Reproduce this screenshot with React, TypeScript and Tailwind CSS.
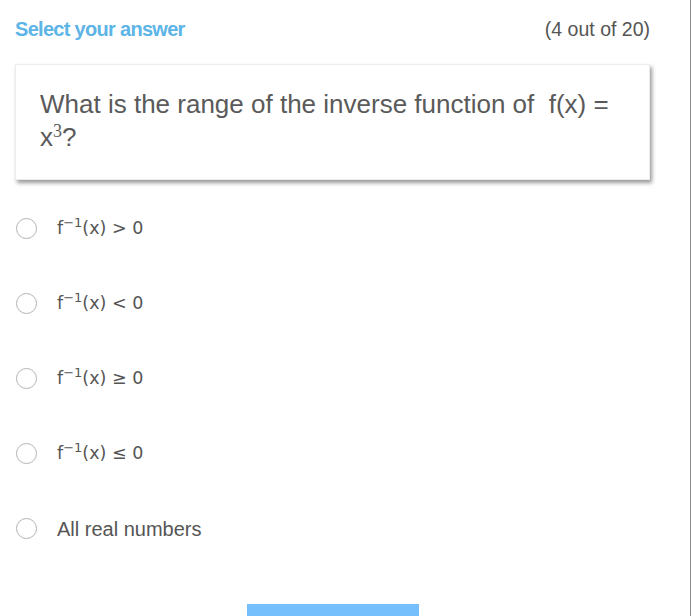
import React from 'react';

type Option = { id: string; fn?: boolean; rel?: string; label?: string };

const OPTIONS: Option[] = [
  { id: 'a', fn: true, rel: '>' },
  { id: 'b', fn: true, rel: '<' },
  { id: 'c', fn: true, rel: '≥' },
  { id: 'd', fn: true, rel: '≤' },
  { id: 'e', label: 'All real numbers' },
];

function Formula({ rel }: { rel: string }) {
  return (
    <span className="font-['DejaVu_Sans',sans-serif] text-[17.5px] text-[#555]">
      f<sup className="top-[-7px] text-[13px]">−1</sup>(x) {rel} 0
    </span>
  );
}

export default function App() {
  return (
    <div className="w-[691px] min-h-[616px] border-r border-[#8c8c8c] bg-white font-['Liberation_Sans',Arial,sans-serif] overflow-hidden">
      <div className="w-[650px] pl-[15px]">
        {/* Header */}
        <div className="flex items-center justify-between pt-[15px] leading-[28px]">
          <span className="text-[20px] font-bold tracking-[-0.7px] text-[#5db4e6]">Select your answer</span>
          <span className="text-[19.5px] text-[#555]">(4 out of 20)</span>
        </div>

        {/* Question card */}
        <div className="mt-[21px] border border-[#ececec] bg-white px-6 pt-[23px] pb-[25px] shadow-[2px_3px_4px_rgba(0,0,0,0.4)]">
          <p className="text-[26px] leading-[33px] text-[#5a5a5a]">
            What is the range of the inverse function of&nbsp; f(x) =
            <br />
            x<sup className="font-['Liberation_Serif',serif] text-[18px] top-[-9px]">3</sup>?
          </p>
        </div>

        {/* Options */}
        <div className="mt-[11px] flex flex-col">
          {OPTIONS.map((o) => (
            <label key={o.id} className="flex h-[75px] items-center cursor-pointer">
              <span className="ml-[1px] h-[21px] w-[21px] shrink-0 rounded-full border-[1.5px] border-[#b3b3b3] bg-white" />
              <span className="ml-[20px]">
                {o.fn ? (
                  <Formula rel={o.rel!} />
                ) : (
                  <span className="text-[20px] text-[#555]">{o.label}</span>
                )}
              </span>
            </label>
          ))}
        </div>

        {/* Submit */}
        <div className="mt-[38px] flex justify-center">
          <button className="h-[44px] w-[172px] bg-[#74bffc] pt-[16px] text-[18px] leading-[24px] text-white">Submit</button>
        </div>
      </div>
    </div>
  );
}
